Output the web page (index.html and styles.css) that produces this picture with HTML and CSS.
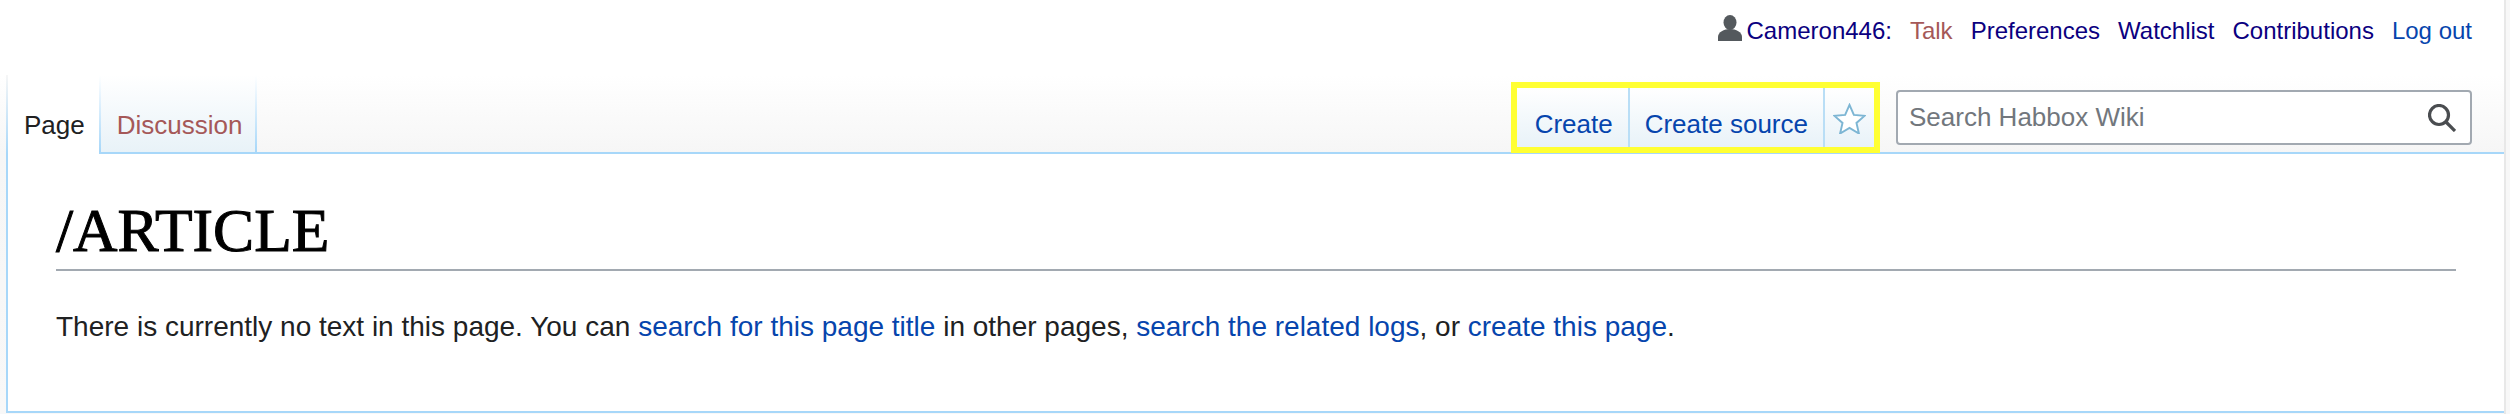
FILE: index.html
```html
<!DOCTYPE html>
<html lang="en">
<head>
<meta charset="utf-8">
<title>/ARTICLE - Habbox Wiki</title>
<link rel="stylesheet" href="styles.css">
</head>
<body>
<div class="page">
  <nav class="personal">
    <svg class="user-icon" viewBox="0 0 24 26" aria-hidden="true"><ellipse cx="12" cy="7.500" rx="6.500" ry="7.500"/><path d="M0 26v-4c0-5 6-8 12-8s12 3 12 8v4z"/></svg>
    <a class="visited user" href="#">Cameron446:</a>
    <a class="red" href="#">Talk</a>
    <a class="visited" href="#">Preferences</a>
    <a class="visited" href="#">Watchlist</a>
    <a class="visited" href="#">Contributions</a>
    <a class="link" href="#">Log out</a>
  </nav>
  <div class="tabbar">
    <ul class="tabs">
      <li class="tab selected"><span>Page</span></li>
      <li class="tab"><a class="red" href="#">Discussion</a></li>
    </ul>
    <div class="right">
      <ul class="actions">
        <li class="action first"><a class="link" href="#">Create</a></li>
        <li class="action second"><a class="link" href="#">Create source</a></li>
        <li class="action star">
          <svg viewBox="0 0 34 32" aria-hidden="true"><path d="M17 2l4.500 10.300 11 1-8.300 7.300 2.500 10.900L17 25.800 7.300 31.500l2.500-10.900L1.500 13.300l11-1z"/></svg>
        </li>
      </ul>
      <div class="search">
        <span class="placeholder">Search Habbox Wiki</span>
        <svg class="search-icon" viewBox="0 0 28 28" aria-hidden="true"><circle cx="11" cy="11" r="9.500"/><path d="M18 18l9 9"/></svg>
      </div>
    </div>
  </div>
  <main class="content">
    <h1 class="title">/ARTICLE</h1>
    <p class="notice">There is currently no text in this page. You can <a class="link" href="#">search for this page title</a> in other pages, <a class="link" href="#">search the related logs</a>, or <a class="link" href="#">create this page</a>.</p>
  </main>
</div>
</body>
</html>
```
FILE: styles.css
```css
* { box-sizing: border-box; }
html, body { margin: 0; height: 100%; }
body { background: #f8f8f8; font-family: "Liberation Sans", Arial, sans-serif; color: #202122; overflow: hidden; }
a { text-decoration: none; }
ul { list-style: none; margin: 0; padding: 0; }
.link { color: #0645ad; }
.visited { color: #0b0080; }
.red { color: #a55858; }
.page {
  height: 414px;
  width: 2506px;
  padding: 0 0 1px 6px;
  background: linear-gradient(#fff 75px, #f6f6f6 153px, #f8f8f8);
  border-right: 2px solid #e8e8e8;
  display: flex;
  flex-direction: column;
}
.personal {
  height: 75px;
  display: flex;
  justify-content: flex-end;
  align-items: flex-start;
  padding: 16px 32px 0 0;
  font-size: 24px;
  line-height: 30px;
  gap: 18px;
}
.user-icon { width: 24px; height: 26px; margin-top: -1px; margin-right: -13px; fill: #54595d; }
.tabbar { height: 79px; display: flex; justify-content: space-between; position: relative; z-index: 1; }
.tabs, .actions { display: flex; }
.tab {
  padding: 34px 15px 0 18px;
  font-size: 26px;
  line-height: 32px;
  border-bottom: 2px solid #a7d7f9;
  background:
    linear-gradient(#fff, #a7d7f9) left top / 2px 100% no-repeat,
    linear-gradient(#fff, #a7d7f9) right top / 2px 100% no-repeat,
    linear-gradient(#fff, #e8f2f8);
}
.tab.selected {
  padding-right: 14px;
  border-bottom: 0;
  background: linear-gradient(#f6f6f6, #a7d7f9) left top / 2px 100% no-repeat, linear-gradient(#fff, #fff);
}
.right { display: flex; align-items: flex-start; }
.actions {
  margin-top: 7px;
  height: 71px;
  border: 6px solid #ffff33;
  background: linear-gradient(#fff, #e8f2f8);
}
.action { padding: 20px 15px 0 15px; font-size: 26px; line-height: 32px; border-left: 2px solid #b9def6; }
.action.first { border-left: 0; padding-left: 18px; }
.action.star { width: 51px; padding: 15px 0 0 8px; }
.star svg { width: 33px; height: 31px; fill: #fff; stroke: #7db6d4; stroke-width: 2; display: block; }
.search {
  margin: 15px 32px 0 16px;
  width: 576px;
  height: 55px;
  border: 2px solid #a2a9b1;
  border-radius: 4px;
  background: #fff;
  display: flex;
  align-items: center;
  justify-content: space-between;
  padding: 0 14px 0 11px;
}
.placeholder { font-size: 26px; color: #72777d; }
.search-icon { width: 28px; height: 28px; fill: none; stroke: #4a4d50; stroke-width: 3.200; }
.content {
  flex: 1;
  background: #fff;
  border: 2px solid #a7d7f9;
  border-right: 0;
  margin-top: -2px;
  padding: 42px 48px 0;
}
.title {
  margin: 0;
  padding-bottom: 5px;
  font-family: "Liberation Serif", "Times New Roman", serif;
  font-weight: 400;
  font-size: 61.600px;
  line-height: 68px;
  color: #000;
  -webkit-text-stroke: 1px #000;
  border-bottom: 2px solid #a2a9b1;
}
.notice { margin: 36px 0 0; font-size: 28px; line-height: 40px; }
```
